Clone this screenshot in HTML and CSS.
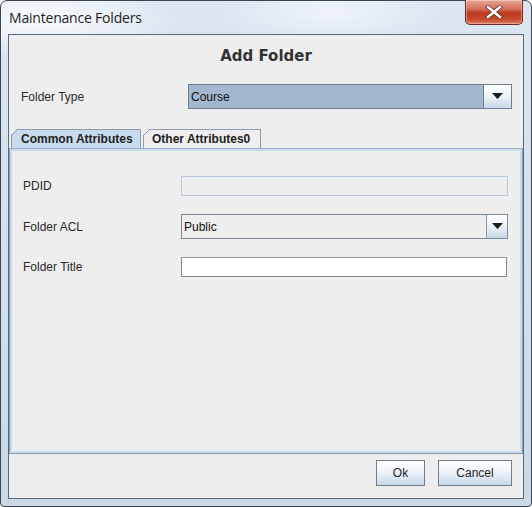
FILE: index.html
```html
<!DOCTYPE html>
<html>
<head>
<meta charset="utf-8">
<link rel="stylesheet" href="styles.css">
</head>
<body>
<div class="window">
  <div class="titlebar">
    <span class="title">Maintenance Folders</span>
    <div class="close">
      <svg width="20" height="14" viewBox="0 0 20 14"><path d="M4 2 L16 12 M16 2 L4 12" stroke="#5a2a22" stroke-width="4.2" stroke-linecap="square"/><path d="M4 2 L16 12 M16 2 L4 12" stroke="#fff" stroke-width="2.6" stroke-linecap="square"/></svg>
    </div>
  </div>
  <div class="client">
    <div class="heading">Add Folder</div>
    <div class="row type-row">
      <span class="label">Folder Type</span>
      <div class="combo combo-selected">
        <span class="combo-text">Course</span>
        <span class="arrow"><svg width="11" height="7" viewBox="0 0 11 7"><polygon points="0,0 11,0 5.5,6" fill="#1a1a1a"/></svg></span>
      </div>
    </div>
    <div class="tabs">
      <div class="tab tab-active">Common Attributes</div>
      <div class="tab tab-other">Other Attributes0</div>
    </div>
    <div class="panel">
      <div class="prow pdid">
        <span class="plabel">PDID</span>
        <div class="field field-disabled"></div>
      </div>
      <div class="prow acl">
        <span class="plabel">Folder ACL</span>
        <div class="combo combo-white">
          <span class="combo-text">Public</span>
          <span class="arrow arrow-small"><svg width="11" height="7" viewBox="0 0 11 7"><polygon points="0,0 11,0 5.5,6" fill="#1a1a1a"/></svg></span>
        </div>
      </div>
      <div class="prow ftitle">
        <span class="plabel">Folder Title</span>
        <div class="field field-white"></div>
      </div>
    </div>
    <div class="buttons">
      <button class="btn btn-ok">Ok</button>
      <button class="btn btn-cancel">Cancel</button>
    </div>
  </div>
</div>
</body>
</html>
```

FILE: styles.css
```css
* { box-sizing: border-box; }
html, body { margin: 0; padding: 0; background: #ffffff; }
body { width: 532px; height: 507px; overflow: hidden; }

.window {
  width: 532px;
  height: 507px;
  border: 1px solid #3b4652;
  border-radius: 7px 7px 4px 4px;
  background:
    radial-gradient(ellipse 140px 40px at 40px 18px, rgba(255,255,255,0.85), rgba(255,255,255,0) 100%),
    radial-gradient(ellipse 120px 30px at 330px 12px, rgba(255,255,255,0.55), rgba(255,255,255,0) 100%),
    linear-gradient(180deg, #dbe6f1 0%, #cbd9e7 100%);
  padding: 0 7px 0 7px;
  display: flex;
  flex-direction: column;
  font-family: "Liberation Sans", Arial, sans-serif;
}

.titlebar {
  height: 33px;
  position: relative;
  display: flex;
  align-items: flex-start;
}
.title {
  font-family: "Open Sans", "DejaVu Sans", sans-serif;
  font-size: 14px;
  color: #1e1e1e;
  margin-top: 7px;
  margin-left: 1px;
  letter-spacing: -0.2px;
}
.close {
  position: absolute;
  right: 1px;
  top: -1px;
  width: 58px;
  height: 25px;
  border: 1px solid #6b2a22;
  border-top: none;
  border-radius: 0 0 5px 5px;
  background: linear-gradient(180deg, #e8a696 0%, #d6735f 35%, #c0391f 55%, #c74a30 80%, #e07a5c 100%);
  display: flex;
  align-items: center;
  justify-content: center;
  box-shadow: inset 0 0 0 1px rgba(255,255,255,0.35);
}
.close svg { display: block; margin-top: -1px; }

.client {
  width: 516px;
  height: 465px;
  border: 1px solid #5d6a77;
  background: #eeeeee;
  display: flex;
  flex-direction: column;
}

.heading {
  font-family: "DejaVu Sans", "Liberation Sans", sans-serif;
  font-weight: bold;
  font-size: 15px;
  color: #333333;
  text-align: center;
  line-height: 18px;
  margin-top: 12px;
  height: 18px;
}

.row {
  display: flex;
  align-items: center;
}
.type-row {
  margin-top: 19px;
  height: 25px;
  padding-left: 12px;
}
.label, .plabel {
  font-size: 12px;
  color: #2a2a2a;
}
.type-row .label { width: 167px; }

.combo {
  height: 25px;
  border: 1px solid #6f7e8d;
  display: flex;
  align-items: stretch;
}
.combo-selected {
  width: 324px;
  background: #a3b8cf;
}
.combo-white {
  width: 327px;
  background: #ffffff;
  border-color: #7c8a98;
}
.combo-text {
  flex: 1;
  font-size: 12px;
  color: #111111;
  display: flex;
  align-items: center;
  padding-left: 2px;
  border-right: 1px solid #6f7e8d;
}
.combo-white .combo-text { background: #eeeeee; border-right-color: #8a98a6; }
.arrow {
  width: 27px;
  background: linear-gradient(180deg, #ffffff 0%, #eef3f9 45%, #c9d8e8 100%);
  display: flex;
  align-items: center;
  justify-content: center;
}
.arrow-small { width: 20px; }
.arrow svg { display: block; }

.tabs {
  display: flex;
  margin-top: 20px;
  padding-left: 2px;
  height: 19px;
  align-items: flex-end;
}
.tab {
  height: 19px;
  font-size: 12px;
  font-weight: bold;
  color: #222222;
  white-space: nowrap;
  border: 1px solid #8c9cad;
  border-bottom: none;
  padding: 0 0 0 8px;
  display: flex;
  align-items: center;
  background: #eeeeee;
  clip-path: polygon(6px 0, 100% 0, 100% 100%, 0 100%, 0 6px);
  position: relative;
}
.tab::before {
  content: "";
  position: absolute;
  left: -1px;
  top: -1px;
  width: 9px;
  height: 9px;
  background: linear-gradient(135deg, transparent 0 4.5px, #8c9cad 4.5px 5.5px, transparent 5.5px);
}
.tab-active {
  width: 130px;
  background: #c8daee;
  padding-left: 9px;
}
.tab-other {
  margin-left: 2px;
  width: 118px;
}

.panel {
  height: 306px;
  border: 1px solid #8c9cad;
  border-top-color: #9fb1c4;
  box-shadow: inset 0 0 0 2px #c8daee;
  background: #eeeeee;
  padding-left: 13px;
  display: flex;
  flex-direction: column;
}
.prow {
  display: flex;
  align-items: center;
}
.plabel { width: 158px; }
.pdid { margin-top: 27px; height: 20px; }
.acl { margin-top: 18px; height: 25px; }
.ftitle { margin-top: 18px; height: 20px; }

.field {
  height: 20px;
  width: 327px;
}
.field-disabled {
  border: 1px solid #b8cbde;
  background: #eeeeee;
}
.field-white {
  width: 326px;
  background: #ffffff;
  border: 1px solid #7c8a98;
  border-top-color: #8e9aa6;
}

.buttons {
  display: flex;
  justify-content: flex-end;
  gap: 13px;
  padding-right: 11px;
  margin-top: 6px;
}
.btn {
  height: 26px;
  font-family: "Liberation Sans", Arial, sans-serif;
  font-size: 12px;
  color: #222222;
  border: 1px solid #6f7e8d;
  background: linear-gradient(180deg, #ffffff 0%, #eef3f9 45%, #c9d9ea 100%);
  padding: 0;
  margin: 0;
}
.btn-ok { width: 49px; }
.btn-cancel { width: 74px; }
```
